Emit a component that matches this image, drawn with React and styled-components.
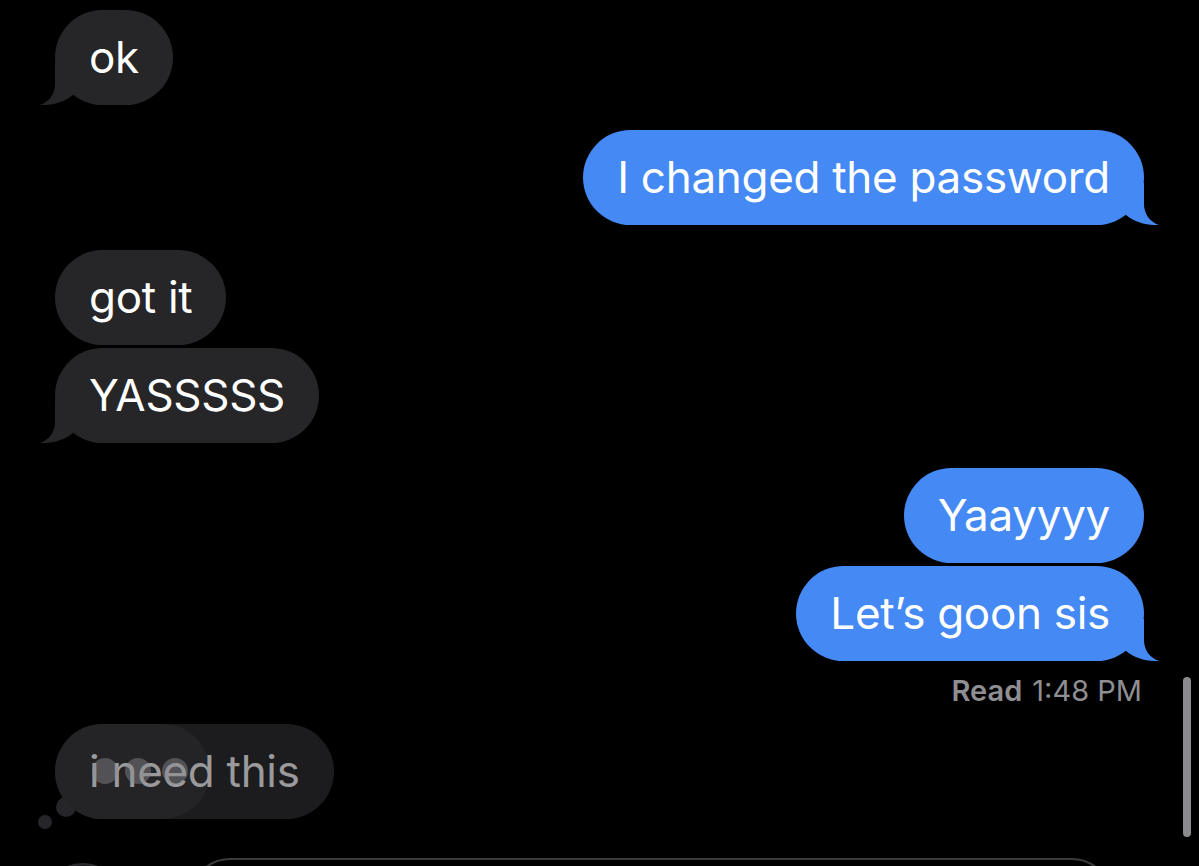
import React from 'react';
import styled, { createGlobalStyle } from 'styled-components';

const GlobalStyle = createGlobalStyle`
  html, body {
    margin: 0;
    padding: 0;
    background: #000;
  }
  body {
    width: 1199px;
    height: 866px;
    overflow: hidden;
    font-family: Inter, 'Noto Sans', sans-serif;
    -webkit-font-smoothing: antialiased;
  }
`;

const Screen = styled.div`
  position: relative;
  height: 866px;
  overflow: hidden;
  background: #000;
  padding-top: 10px;
  box-sizing: border-box;
`;

const Thread = styled.div`
  display: flex;
  flex-direction: column;
  padding: 0 55px;
`;

const Row = styled.div`
  display: flex;
  justify-content: ${({ $mine }) => ($mine ? 'flex-end' : 'flex-start')};
  margin-top: ${({ $gap }) => $gap || 0}px;
`;

const Bubble = styled.div`
  position: relative;
  padding: 20px 34px;
  border-radius: 48px;
  font-size: 44px;
  line-height: 55px;
  letter-spacing: -0.3px;
  color: #fff;
  background: ${({ $mine }) => ($mine ? '#4489f4' : '#262628')};
  white-space: nowrap;
`;

const TailSvg = styled.svg`
  position: absolute;
  bottom: 0;
  width: 50px;
  height: 45px;
  fill: ${({ $mine }) => ($mine ? '#4489f4' : '#262628')};
  ${({ $mine }) => ($mine ? 'right: -15px;' : 'left: -15px; transform: scaleX(-1);')}
`;

const Tail = ({ mine }) => (
  <TailSvg $mine={mine} viewBox="0 0 50 45">
    <path d="M35 3 L35 24 C35 34 41 42 50 45 C40 45.5 26 43 17 35 L17 3 Z" />
  </TailSvg>
);

const ReadLine = styled.div`
  margin-top: 13px;
  text-align: right;
  font-size: 29px;
  line-height: 34px;
  color: #8e8e93;
  padding-right: 2px;

  b {
    font-weight: 600;
    margin-right: 10px;
  }
`;

const FadingBubble = styled(Bubble)`
  background: #1c1c1e;
  color: #9a9a9c;
`;

const TypingCover = styled.div`
  position: absolute;
  left: 0;
  top: 0;
  bottom: 0;
  width: 155px;
  border-radius: 48px;
  background: #242427;
`;

const BubbleText = styled.span`
  position: relative;
`;

const Dot = styled.span`
  position: absolute;
  top: 34px;
  left: ${({ $x }) => $x}px;
  width: 26px;
  height: 26px;
  border-radius: 50%;
  background: rgba(140, 140, 144, 0.45);
`;

const Puff = styled.span`
  position: absolute;
  left: ${({ $x }) => $x}px;
  top: ${({ $y }) => $y}px;
  width: ${({ $size }) => $size}px;
  height: ${({ $size }) => $size}px;
  border-radius: 50%;
  background: #26262a;
`;

const Footer = styled.div`
  display: flex;
  align-items: flex-start;
  gap: 67px;
  margin-top: 39px;
  padding-left: 43px;
`;

const PlusButton = styled.div`
  flex: none;
  width: 80px;
  height: 80px;
  margin-top: 5px;
  border-radius: 50%;
  background: #1a1a1c;
  border: 2px solid #2c2c2e;
  box-sizing: border-box;
`;

const InputField = styled.div`
  flex: none;
  width: 922px;
  height: 80px;
  border-radius: 40px;
  border: 2px solid #3a3a3c;
  box-sizing: border-box;
`;

const Scrollbar = styled.div`
  position: absolute;
  right: 8px;
  top: 677px;
  width: 8px;
  height: 160px;
  border-radius: 4px;
  background: #8a8a8c;
`;

const messages = [
  { text: 'ok', mine: false, gap: 0, tail: true },
  { text: 'I changed the password', mine: true, gap: 25, tail: true },
  { text: 'got it', mine: false, gap: 25, tail: false },
  { text: 'YASSSSS', mine: false, gap: 3, tail: true },
  { text: 'Yaayyyy', mine: true, gap: 25, tail: false },
  { text: 'Let\u2019s goon sis', mine: true, gap: 3, tail: true },
];

const App = () => (
  <Screen>
    <GlobalStyle />
    <Thread>
      {messages.map((m, i) => (
        <Row key={i} $mine={m.mine} $gap={m.gap}>
          <Bubble $mine={m.mine}>
            {m.tail && <Tail mine={m.mine} />}
            <BubbleText>{m.text}</BubbleText>
          </Bubble>
        </Row>
      ))}

      <ReadLine>
        <b>Read</b>1:48 PM
      </ReadLine>

      <Row $gap={16}>
        <FadingBubble>
          <Puff $x={-17} $y={91} $size={14} />
          <Puff $x={1} $y={73} $size={20} />
          <TypingCover />
          <BubbleText>i need this</BubbleText>
          <Dot $x={37} />
          <Dot $x={70} />
          <Dot $x={107} />
        </FadingBubble>
      </Row>
    </Thread>

    <Footer>
      <PlusButton />
      <InputField />
    </Footer>

    <Scrollbar />
  </Screen>
);

export default App;
